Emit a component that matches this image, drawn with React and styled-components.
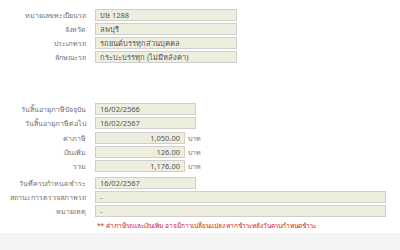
import React from "react"
import styled, { createGlobalStyle } from "styled-components"

const GlobalStyle = createGlobalStyle`
  html, body {
    margin: 0;
    padding: 0;
    background: #ffffff;
  }
  body {
    font-family: Tahoma, "Noto Sans", "DejaVu Sans", sans-serif;
    width: 400px;
    height: 250px;
    overflow: hidden;
  }
`

const vehicle = [
  { label: "หมายเลขทะเบียนรถ", value: "บษ 1288" },
  { label: "จังหวัด", value: "ลพบุรี" },
  { label: "ประเภทรถ", value: "รถยนต์บรรทุกส่วนบุคคล" },
  { label: "ลักษณะรถ", value: "กระบะบรรทุก (ไม่มีหลังคา)" },
]

const amounts = [
  { label: "ค่าภาษี", value: "1,050.00" },
  { label: "เงินเพิ่ม", value: "126.00" },
  { label: "รวม", value: "1,176.00" },
]

export default function App() {
  return (
    <>
      <GlobalStyle />
      <Page>
        <Content>
          <Group>
            {vehicle.map(item => (
              <Row key={item.label}>
                <Label>{item.label}</Label>
                <Field $width={142}>{item.value}</Field>
              </Row>
            ))}
          </Group>

          <Group $top={40}>
            <Row>
              <Label>วันสิ้นอายุภาษีปัจจุบัน</Label>
              <Field $width={101}>16/02/2566</Field>
            </Row>
            <Row>
              <Label>วันสิ้นอายุภาษีต่อไป</Label>
              <Field $width={101}>16/02/2567</Field>
            </Row>
            {amounts.map((item, i) => (
              <Row key={item.label} $top={i === 0 ? 1 : 0}>
                <Label>{item.label}</Label>
                <Field $width={90} $right>
                  {item.value}
                </Field>
                <Unit>บาท</Unit>
              </Row>
            ))}
            <Row $top={3}>
              <Label>วันที่ครบกำหนดชำระ</Label>
              <Field $width={101}>16/02/2567</Field>
            </Row>
            <Row>
              <Label>สถานะการตรวจสภาพรถ</Label>
              <Field $width={291}>-</Field>
            </Row>
            <Row>
              <Label>หมายเหตุ</Label>
              <Field $width={291}>-</Field>
            </Row>
            <Note>
              ** ค่าภาษีรถและเงินเพิ่ม อาจมีการเปลี่ยนแปลง หากชำระหลังวันครบกำหนดชำระ
            </Note>
          </Group>
        </Content>
        <Footer />
      </Page>
    </>
  )
}

const Page = styled.div`
  display: flex;
  flex-direction: column;
  height: 250px;
`

const Content = styled.div`
  flex: 1;
  padding-top: 9px;
`

const Group = styled.div`
  display: flex;
  flex-direction: column;
  gap: 2px;
  margin-top: ${p => p.$top || 0}px;
`

const Row = styled.div`
  display: flex;
  align-items: center;
  height: 12px;
  margin-top: ${p => p.$top || 0}px;
`

const Label = styled.div`
  width: 86px;
  flex: none;
  margin-right: 9px;
  text-align: right;
  font-size: 7px;
  color: #707070;
  white-space: nowrap;
`

const Field = styled.div`
  box-sizing: border-box;
  width: ${p => p.$width}px;
  height: 12px;
  flex: none;
  padding: 0 4px;
  display: flex;
  align-items: center;
  justify-content: ${p => (p.$right ? "flex-end" : "flex-start")};
  background: #eeeedf;
  border: 1px solid #cfcfcf;
  font-size: 7.5px;
  color: #555555;
  white-space: nowrap;
  overflow: hidden;
`

const Unit = styled.span`
  margin-left: 3px;
  font-size: 7px;
  color: #777777;
`

const Note = styled.div`
  margin-top: 2px;
  padding-left: 97px;
  font-size: 6.5px;
  color: #cc2222;
  white-space: nowrap;
`

const Footer = styled.div`
  height: 17px;
  background: #f4f4f4;
`
